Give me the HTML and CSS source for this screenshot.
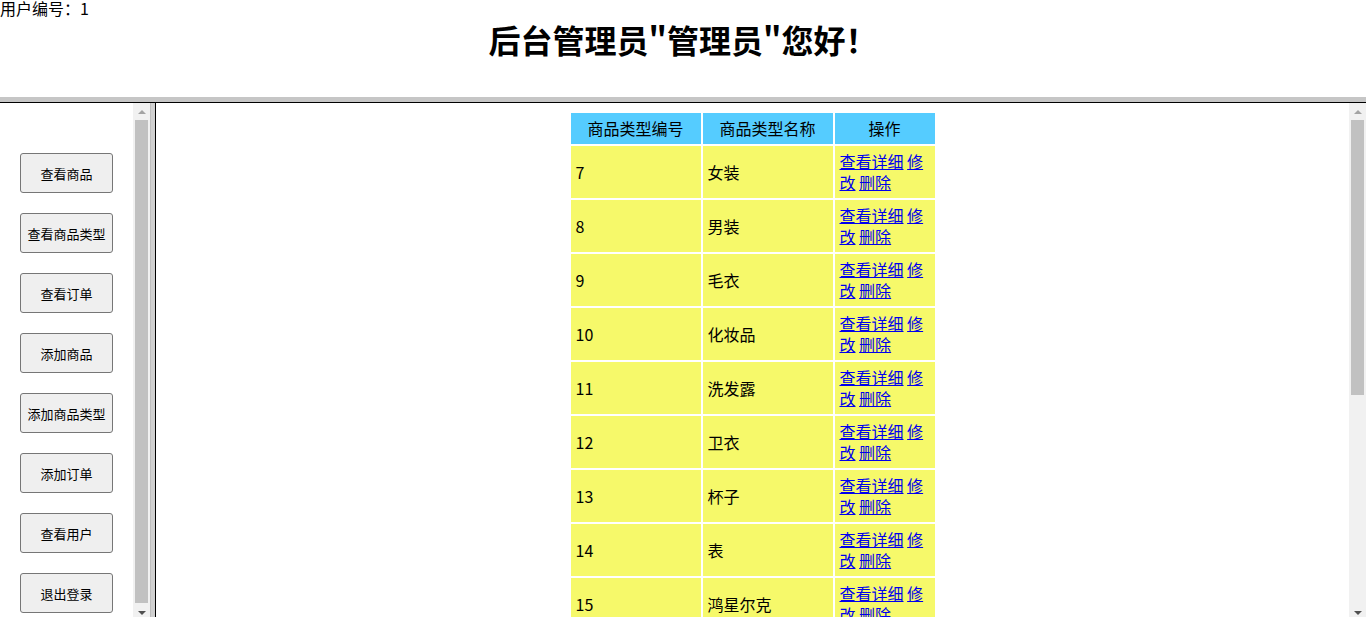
FILE: index.html
```html
<!DOCTYPE html>
<html lang="zh">
<head>
<meta charset="utf-8">
<title>后台管理</title>
<link rel="stylesheet" href="styles.css">
</head>
<body>
<div class="top">
  <div class="uid">用户编号<span class="fw">：</span>1</div>
  <h1 class="title">后台管理员"管理员"您好<span class="fw">！</span></h1>
</div>
<div class="hsplit"></div>
<div class="frames">
  <div class="frame left">
    <div class="content nav">
      <button class="navbtn">查看商品</button>
      <button class="navbtn">查看商品类型</button>
      <button class="navbtn">查看订单</button>
      <button class="navbtn">添加商品</button>
      <button class="navbtn">添加商品类型</button>
      <button class="navbtn">添加订单</button>
      <button class="navbtn">查看用户</button>
      <button class="navbtn">退出登录</button>
    </div>
    <div class="sbar">
      <div class="sbtn"><span class="arrow up"></span></div>
      <div class="track"><div class="thumb thumb-left"></div></div>
      <div class="sbtn"><span class="arrow down"></span></div>
    </div>
  </div>
  <div class="vsplit"></div>
  <div class="frame right">
    <div class="content main">
      <table class="grid">
        <thead>
          <tr><th class="c1">商品类型编号</th><th class="c2">商品类型名称</th><th class="c3">操作</th></tr>
        </thead>
        <tbody>
          <tr><td>7</td><td>女装</td><td><a href="#">查看详细</a> <a href="#">修改</a> <a href="#">删除</a></td></tr>
          <tr><td>8</td><td>男装</td><td><a href="#">查看详细</a> <a href="#">修改</a> <a href="#">删除</a></td></tr>
          <tr><td>9</td><td>毛衣</td><td><a href="#">查看详细</a> <a href="#">修改</a> <a href="#">删除</a></td></tr>
          <tr><td>10</td><td>化妆品</td><td><a href="#">查看详细</a> <a href="#">修改</a> <a href="#">删除</a></td></tr>
          <tr><td>11</td><td>洗发露</td><td><a href="#">查看详细</a> <a href="#">修改</a> <a href="#">删除</a></td></tr>
          <tr><td>12</td><td>卫衣</td><td><a href="#">查看详细</a> <a href="#">修改</a> <a href="#">删除</a></td></tr>
          <tr><td>13</td><td>杯子</td><td><a href="#">查看详细</a> <a href="#">修改</a> <a href="#">删除</a></td></tr>
          <tr><td>14</td><td>表</td><td><a href="#">查看详细</a> <a href="#">修改</a> <a href="#">删除</a></td></tr>
          <tr><td>15</td><td>鸿星尔克</td><td><a href="#">查看详细</a> <a href="#">修改</a> <a href="#">删除</a></td></tr>
          <tr><td>16</td><td>鞋子</td><td><a href="#">查看详细</a> <a href="#">修改</a> <a href="#">删除</a></td></tr>
        </tbody>
      </table>
    </div>
    <div class="sbar">
      <div class="sbtn"><span class="arrow up"></span></div>
      <div class="track"><div class="thumb thumb-right"></div></div>
      <div class="sbtn"><span class="arrow down"></span></div>
    </div>
  </div>
</div>
</body>
</html>
```

FILE: styles.css
```css
html, body {
  margin: 0;
  padding: 0;
  height: 617px;
  overflow: hidden;
  background: #fff;
}

body {
  font-family: "Noto Sans CJK SC", "Noto Sans", sans-serif;
  font-size: 16px;
  color: #000;
  display: flex;
  flex-direction: column;
}

.top {
  height: 97px;
  flex: none;
}

.uid {
  font-size: 16px;
  line-height: 16px;
}

.fw {
  display: inline-block;
  width: 1em;
  text-align: center;
  font-feature-settings: "fwid" 1;
}

.title {
  margin: 7px 0 0;
  font-size: 32px;
  line-height: 32px;
  font-weight: bold;
  text-align: center;
}

.hsplit {
  flex: none;
  height: 5px;
  background: #c6c6c6;
  border-bottom: 1px solid #000;
}

.frames {
  flex: none;
  height: 518px;
  display: flex;
}

.frame {
  display: flex;
  height: 100%;
  overflow: hidden;
}

.frame.left {
  width: 150px;
  flex: none;
}

.frame.right {
  flex: 1;
  border-left: 1px solid #000;
}

.vsplit {
  flex: none;
  width: 5px;
  background: #d0d0d0;
  border-left: 1px solid #bdbdbd;
  box-sizing: border-box;
}

.content {
  flex: 1;
  overflow: hidden;
}

.nav {
  display: flex;
  flex-direction: column;
  align-items: flex-start;
  gap: 20px;
  padding: 50px 0 0 20px;
}

.navbtn {
  width: 93px;
  height: 40px;
  flex: none;
  background: #efefef;
  border: 1px solid #767676;
  border-radius: 3px;
  font-family: "Noto Sans CJK SC", sans-serif;
  font-size: 13px;
  color: #000;
  padding: 0;
}

.sbar {
  flex: none;
  width: 17px;
  background: #f1f1f1;
  display: flex;
  flex-direction: column;
}

.sbtn {
  flex: none;
  height: 17px;
  display: flex;
  align-items: center;
  justify-content: center;
}

.arrow {
  width: 0;
  height: 0;
  border-left: 4px solid transparent;
  border-right: 4px solid transparent;
}

.arrow.up {
  border-bottom: 4px solid #a3a3a3;
}

.arrow.down {
  border-top: 4px solid #505050;
}

.track {
  flex: 1;
  padding: 0 2px;
}

.thumb {
  background: #c1c1c1;
}

.thumb-left {
  height: 483px;
}

.thumb-right {
  height: 275px;
}

.main {
  padding-top: 8px;
}

.grid {
  margin: 0 auto;
  border-collapse: separate;
  border-spacing: 2px;
  table-layout: fixed;
  font-size: 16px;
  line-height: 21px;
}

.grid th {
  background: #55ccff;
  font-weight: normal;
  padding: 5px;
  text-align: center;
}

.grid td {
  background: #f6f96a;
  padding: 5px;
  text-align: left;
  vertical-align: middle;
  height: 42px;
}

.grid .c1, .grid .c2 {
  width: 120px;
}

.grid .c3 {
  width: 90px;
}

.grid a {
  color: #0000ee;
  text-decoration: underline;
}
```
